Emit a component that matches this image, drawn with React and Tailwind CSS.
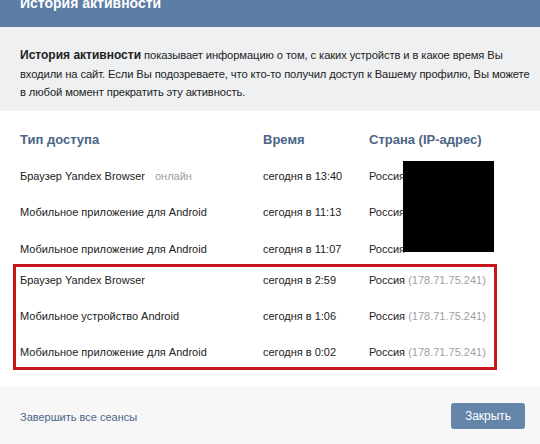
import React from 'react';

const sessions = [
  { type: 'Браузер Yandex Browser', online: true, time: 'сегодня в 13:40', country: 'Россия' },
  { type: 'Мобильное приложение для Android', time: 'сегодня в 11:13', country: 'Россия' },
  { type: 'Мобильное приложение для Android', time: 'сегодня в 11:07', country: 'Россия' },
];

const flagged = [
  { type: 'Браузер Yandex Browser', time: 'сегодня в 2:59', country: 'Россия', ip: '178.71.75.241' },
  { type: 'Мобильное устройство Android', time: 'сегодня в 1:06', country: 'Россия', ip: '178.71.75.241' },
  { type: 'Мобильное приложение для Android', time: 'сегодня в 0:02', country: 'Россия', ip: '178.71.75.241' },
];

const SessionRow = ({ s, className }) => (
  <div className={`grid grid-cols-[243px_106px_1fr] items-center whitespace-nowrap text-[#222] ${className}`}>
    <div>
      {s.type}
      {s.online && <span className="ml-[10px] text-[#a0a0a0]">онлайн</span>}
    </div>
    <div>{s.time}</div>
    <div>
      {s.country}
      {s.ip && <span className="text-[#a0a0a0]"> ({s.ip})</span>}
    </div>
  </div>
);

export default function App() {
  return (
    <div
      className="relative w-[540px] h-[444px] overflow-hidden bg-white text-[11px]"
      style={{ fontFamily: '"Liberation Sans", Arial, sans-serif' }}
    >
      {/* Header */}
      <div className="h-[27px] bg-[#5b7ca5] overflow-hidden px-5">
        <div className="-mt-[6px] text-[14px] leading-[18px] font-bold text-white">История активности</div>
      </div>

      {/* Info */}
      <div className="h-[84px] bg-[#eef0f2] pl-5 pr-[8px] pt-[19px] text-[11.2px] tracking-[-0.1px] leading-[18.5px] text-[#222] whitespace-nowrap">
        <span className="font-bold text-[12px] tracking-normal">История активности</span> показывает информацию о
        том, с каких устройств и в какое время Вы
        <br />
        входили на сайт. Если Вы подозреваете, что кто-то получил доступ к Вашему профилю, Вы можете
        <br />в любой момент прекратить эту активность.
      </div>

      {/* Table */}
      <div className="pt-[10px]">
        <div className="grid grid-cols-[243px_106px_1fr] items-center h-[36.5px] px-5 text-[13px] font-bold text-[#4a6587]">
          <div>Тип доступа</div>
          <div>Время</div>
          <div>Страна (IP-адрес)</div>
        </div>
        {sessions.map((s, i) => (
          <SessionRow key={i} s={s} className="h-[36.5px] px-5" />
        ))}
        <div className="-mt-[3px] ml-[13px] w-[484px] border-[3px] border-[#c8141c] pt-[4.5px] pb-[7.5px] flex flex-col gap-[20px]">
          {flagged.map((s, i) => (
            <SessionRow key={i} s={s} className="h-[16px] pl-[4px]" />
          ))}
        </div>
      </div>

      {/* Redaction */}
      <div className="absolute left-[403px] top-[161px] w-[91px] h-[91px] bg-black" />

      {/* Footer */}
      <div className="absolute left-0 right-0 bottom-0 h-[57px] bg-[#f7f7f7] flex items-center justify-between pl-5 pr-[15px]">
        <span className="mt-[3px] text-[#4a6587]">Завершить все сеансы</span>
        <button className="w-[74px] h-[26px] rounded-[3px] bg-[#6484a9] text-white text-[12px]">Закрыть</button>
      </div>
    </div>
  );
}
